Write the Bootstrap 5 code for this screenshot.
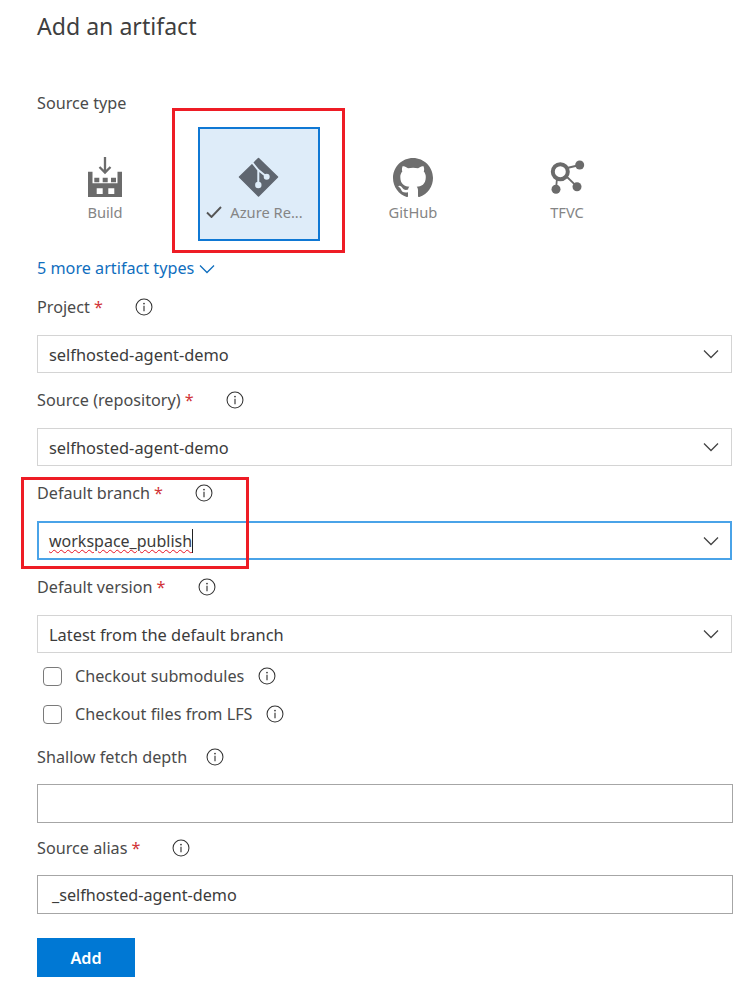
<!DOCTYPE html>
<html lang="en"><head><meta charset="utf-8"><title>Add an artifact</title>
<link href="https://cdn.jsdelivr.net/npm/bootstrap@5.3.0/dist/css/bootstrap.min.css" rel="stylesheet">
<style>
html,body{background:#fff;}
body{font-family:"Noto Sans","Open Sans",sans-serif;font-size:16.2px;color:#444;height:999px;overflow:hidden;position:relative;}
.pane{padding:0 21px 0 37px;}
.ttl{font-size:23.1px;line-height:32px;margin:0;padding-top:10px;font-weight:400;color:#3f3f3f;}
.lbl{height:24px;line-height:24px;color:#4a4a4a;}
.req{color:#d13438;margin-left:4px;}
.inf{width:18px;height:18px;flex:none;}
.gap-star{margin-left:32px;}
.tiles{gap:32px;margin-top:12px;margin-left:7px;}
.tile{width:122px;height:114px;border:2px solid transparent;color:#858585;font-size:14.7px;padding-top:27px;line-height:22px;}
.tile.sel{background:#deecf9;border-color:#0f78d4;}
.ico{height:44px;width:44px;margin-bottom:1px;flex:none;}
.gh{height:40px;width:40px;margin:2px 0 3px;flex:none;}
.cap{margin-right:9px;}
.tick{width:16px;height:12px;}
.more{color:#106ebe;text-decoration:none;line-height:24px;margin-top:15px;}
.sel-box{height:38px;border:1px solid #d4d4d4;padding:0 11px;color:#3b3b3b;margin-top:16px;margin-right:1px;font-size:16.4px;}
.sel-box.act{border:2px solid #4aa3e8;height:39px;padding:0 10px;}
.seltxt{padding-top:3px;}
.chev{width:16px;height:10px;margin-right:1px;}
.chev-link{width:16px;height:10px;margin-top:2px;margin-left:-3px;}
.squig{text-decoration:underline wavy #e81123 1px;text-underline-offset:2px;border-right:1.5px solid #222;font-size:16px;}
.chk{width:19px;height:19px;border:1px solid #7a7a7a;border-radius:4px;flex:none;margin-left:6px;margin-right:13px;}
.txt{height:39px;border:1px solid #a6a6a6;padding:0 14px;width:696px;color:#3b3b3b;margin-top:15px;}
.go{width:98px;height:39px;background:#0078d4;color:#fff;border:0;border-radius:0;font-weight:600;font-size:16.2px;margin-top:24px;}
.mt15{margin-top:15px;}
.redbox{position:absolute;border:3px solid #ee1c25;}
.rb1{left:172px;top:108px;width:173px;height:145px;}
.rb2{left:21px;top:477px;width:228px;height:92px;}
</style></head><body>
<svg width="0" height="0" class="position-absolute"><defs>
<symbol id="i" viewBox="0 0 19 19"><circle cx="9.5" cy="9.5" r="8.4" fill="none" stroke="#333" stroke-width="1.1"/><circle cx="9.5" cy="5.9" r=".9" fill="#333"/><path d="M9.5 8.3v5.6" stroke="#333" stroke-width="1.2"/></symbol>
<symbol id="c" viewBox="0 0 16 10"><path d="M1 1.5l7 7 7-7" fill="none" stroke="#444" stroke-width="1.3"/></symbol>
</defs></svg>
<div class="pane">
<h1 class="ttl">Add an artifact</h1>
<div class="lbl" style="margin-top:49px">Source type</div>
<div class="d-flex tiles">
 <div class="tile d-flex flex-column align-items-center">
  <svg class="ico" viewBox="0 0 44 44"><path d="M22 1v15.500M16.500 11l5.500 5.500 5.500-5.500" fill="none" stroke="#6b6b6b" stroke-width="2.300"/><path fill-rule="evenodd" fill="#6b6b6b" d="M5 15.700h4.500v11.600H34.500V15.700H39V41H5zM13.700 32.300V38h6v-5.700zM25.300 32.300V38h6v-5.700z"/><path fill="#6b6b6b" d="M11.300 21.700h5v4.600h-5zM19.700 21.700h5v4.600h-5zM28 21.700h5v4.600h-5z"/></svg>
  <span>Build</span></div>
 <div class="tile sel d-flex flex-column align-items-center">
  <svg class="ico" viewBox="0 0 44 44"><path d="M21.500 2.500 40.500 21 21.500 40 2.500 21z" fill="#5f6670" stroke="#5f6670" stroke-width="1.500" stroke-linejoin="round"/><path d="M15.300 6.700l6 7.300v15M21.300 14l8.400 6.700" fill="none" stroke="#deecf9" stroke-width="2"/><circle cx="21.300" cy="29" r="3.200" fill="#deecf9"/><circle cx="29.700" cy="20.700" r="3" fill="#deecf9"/></svg>
  <span class="d-flex align-items-center cap gap-2"><svg class="tick" viewBox="0 0 16 12"><path d="M1 6.500l4.500 4.500L15 1" fill="none" stroke="#555" stroke-width="1.900"/></svg>Azure Re...</span></div>
 <div class="tile d-flex flex-column align-items-center">
  <svg class="gh" viewBox="0 0 16 16"><path fill="#6e6e6e" d="M8 0C3.580 0 0 3.580 0 8c0 3.540 2.290 6.530 5.470 7.590.4.070.55-.17.55-.38 0-.19-.01-.82-.01-1.490-2.010.37-2.530-.49-2.690-.94-.09-.23-.48-.94-.82-1.130-.28-.15-.68-.52-.01-.53.630-.01 1.080.58 1.230.82.720 1.210 1.870.87 2.330.66.070-.52.280-.87.510-1.070-1.780-.2-3.640-.89-3.640-3.950 0-.87.310-1.590.82-2.150-.08-.2-.36-1.020.08-2.120 0 0 .67-.21 2.200.82.640-.18 1.320-.27 2-.27s1.360.09 2 .27c1.530-1.040 2.200-.82 2.200-.82.440 1.100.16 1.920.08 2.120.51.560.82 1.270.82 2.150 0 3.070-1.870 3.750-3.650 3.950.29.25.54.73.54 1.480 0 1.070-.01 1.930-.01 2.200 0 .21.150.46.550.38A8.010 8.010 0 0 0 16 8c0-4.420-3.580-8-8-8z"/></svg>
  <span>GitHub</span></div>
 <div class="tile d-flex flex-column align-items-center">
  <svg class="ico" viewBox="0 0 44 44"><g fill="none" stroke="#6b6b6b"><path stroke-width="1.800" d="M22 12l12.700-3M21 20l11 10.700M12 22l-1 11.300"/><circle cx="15.300" cy="15.700" r="7.500" stroke-width="4"/></g><circle cx="34.700" cy="9" r="4.500" fill="#6b6b6b"/><circle cx="32" cy="30.700" r="4.500" fill="#6b6b6b"/><circle cx="11" cy="33.300" r="4.500" fill="#6b6b6b"/></svg>
  <span>TFVC</span></div>
</div>
<a href="#" class="more d-inline-flex align-items-center gap-2">5 more artifact types <svg class="chev-link" viewBox="0 0 16 10"><path d="M1 1.500l7 7 7-7" fill="none" stroke="#106ebe" stroke-width="1.300"/></svg></a>

<div class="d-flex align-items-center lbl mt15">Project<span class="req">*</span><svg class="inf gap-star"><use href="#i"/></svg></div>
<div class="sel-box d-flex align-items-center justify-content-between"><span class="seltxt">selfhosted-agent-demo</span><svg class="chev"><use href="#c"/></svg></div>

<div class="d-flex align-items-center lbl mt15">Source (repository)<span class="req">*</span><svg class="inf gap-star"><use href="#i"/></svg></div>
<div class="sel-box d-flex align-items-center justify-content-between"><span class="seltxt">selfhosted-agent-demo</span><svg class="chev"><use href="#c"/></svg></div>

<div class="d-flex align-items-center lbl mt15">Default branch<span class="req">*</span><svg class="inf gap-star"><use href="#i"/></svg></div>
<div class="sel-box act d-flex align-items-center justify-content-between"><span class="squig">workspace_publish</span><svg class="chev"><use href="#c"/></svg></div>

<div class="d-flex align-items-center lbl mt15">Default version<span class="req">*</span><svg class="inf gap-star"><use href="#i"/></svg></div>
<div class="sel-box d-flex align-items-center justify-content-between"><span class="seltxt">Latest from the default branch</span><svg class="chev"><use href="#c"/></svg></div>

<div class="d-flex align-items-center lbl" style="margin-top:11px"><span class="chk"></span>Checkout submodules<svg class="inf" style="margin-left:14px"><use href="#i"/></svg></div>
<div class="d-flex align-items-center lbl" style="margin-top:14px"><span class="chk"></span>Checkout files from LFS<svg class="inf" style="margin-left:14px"><use href="#i"/></svg></div>

<div class="d-flex align-items-center lbl" style="margin-top:19px">Shallow fetch depth<svg class="inf" style="margin-left:19px"><use href="#i"/></svg></div>
<div class="txt"></div>
<div class="d-flex align-items-center lbl" style="margin-top:13px">Source alias<span class="req">*</span><svg class="inf gap-star"><use href="#i"/></svg></div>
<div class="txt d-flex align-items-center">_selfhosted-agent-demo</div>
<button class="btn go d-block">Add</button>
</div>
<div class="redbox rb1"></div>
<div class="redbox rb2"></div>
</body></html>
